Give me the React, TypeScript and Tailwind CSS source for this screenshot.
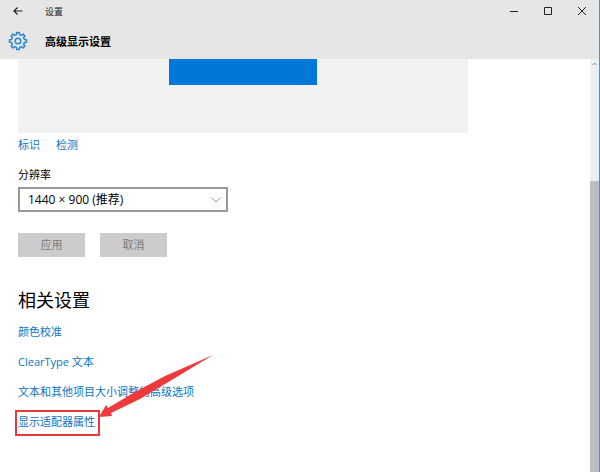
import { useState } from "react";

const relatedLinks = ["颜色校准", "ClearType 文本", "文本和其他项目大小调整的高级选项"];

// outline of a cog with 8 teeth around 0,0
const gearPath = () => {
  const points: string[] = [];
  for (let i = 0; i < 8; i++) {
    const corners = [
      [-13, 6.6],
      [-9, 8.6],
      [9, 8.6],
      [13, 6.6],
    ];
    corners.forEach(([offset, radius]) => {
      const angle = ((i * 45 + offset) * Math.PI) / 180;
      points.push(`${(Math.cos(angle) * radius).toFixed(2)} ${(Math.sin(angle) * radius).toFixed(2)}`);
    });
  }
  return `M${points.join("L")}Z`;
};

function TitleBar() {
  return (
    <header className="bg-[#e6e6e6] h-[59px] shrink-0">
      <div className="flex items-center justify-between h-[22px]">
        <div className="flex items-center">
          <button aria-label="返回" className="w-9 h-[22px] flex items-center justify-center">
            <svg width="10" height="8" viewBox="0 0 10 8" fill="none" stroke="#222" strokeWidth="1.2">
              <path d="M9.5 4H1M4.5 .5L1 4l3.500 3.500" />
            </svg>
          </button>
          <span className="pl-[9px] text-[9px] leading-none text-[#222]">设置</span>
        </div>
        <div className="flex items-center">
          <button aria-label="最小化" className="w-[34px] h-[22px] flex items-center justify-center">
            <svg width="8" height="8" viewBox="0 0 8 8" stroke="#222">
              <path d="M0 4.500h8" />
            </svg>
          </button>
          <button aria-label="最大化" className="w-[34px] h-[22px] flex items-center justify-center">
            <svg width="8" height="8" viewBox="0 0 8 8" fill="none" stroke="#222">
              <path d="M.5 .5h7v7h-7z" />
            </svg>
          </button>
          <button aria-label="关闭" className="w-[34px] h-[22px] flex items-center justify-center">
            <svg width="8" height="8" viewBox="0 0 8 8" stroke="#222">
              <path d="M0 0l8 8M8 0L0 8" />
            </svg>
          </button>
        </div>
      </div>
      <div className="flex items-center h-[38px]">
        <svg className="ml-2" width="20" height="20" viewBox="-10 -10 20 20" fill="none" stroke="#2a86c8" strokeWidth="1.5" strokeLinejoin="round">
          <path d={gearPath()} />
          <circle r="2.800" />
        </svg>
        <h1 className="pl-[17px] text-[11px] leading-none font-bold text-black">高级显示设置</h1>
      </div>
    </header>
  );
}

function ScrollBar() {
  return (
    <div className="w-[9px] shrink-0 flex flex-col">
      <div className="h-[122px] shrink-0 pt-[3px] flex justify-center bg-linear-to-r from-[#f1efed] from-50% to-[#e3f1fa] to-50%">
        <svg width="5" height="4" viewBox="0 0 5 4" fill="none" stroke="#888">
          <path d="M.5 3l2-2 2 2" />
        </svg>
      </div>
      <div className="grow bg-linear-to-r from-[#c1bfbe] from-50% to-[#b3c0cb] to-50%"></div>
    </div>
  );
}

export default function App() {
  const [resolution, setResolution] = useState("1440");

  return (
    <div className="flex flex-col h-screen overflow-hidden bg-white border-r border-[#4d93bd] text-[11px] leading-4 text-black font-['Open_Sans','Noto_Sans_CJK_SC',sans-serif]">
      <TitleBar />
      <div className="flex grow min-h-0">
        <main className="grow min-w-0 pl-[18px]">
          <div className="max-w-[450px] h-[74px] bg-[#f2f2f2] flex justify-center">
            <div className="w-[148px] h-[26px] bg-[#0078d7]"></div>
          </div>
          <div className="flex gap-4 pt-1 text-[#0a74c4]">
            <a href="#identify">标识</a>
            <a href="#detect">检测</a>
          </div>
          <label htmlFor="resolution" className="block pt-[14px]">分辨率</label>
          <div className="relative w-[210px] mt-1">
            <select
              id="resolution"
              value={resolution}
              onChange={(e) => setResolution(e.target.value)}
              className="block appearance-none w-full h-[25px] pl-2 pr-6 border-2 border-[#999] bg-white text-xs"
            >
              <option value="1440">1440 × 900 (推荐)</option>
              <option value="1280">1280 × 800</option>
            </select>
            <svg className="absolute right-[7px] top-[10px] pointer-events-none" width="10" height="6" viewBox="0 0 10 6" fill="none" stroke="#999">
              <path d="M.5 .5L5 5 9.500 .5" />
            </svg>
          </div>
          <div className="flex gap-[15px] pt-[21px] text-[#7a7a7a]">
            <button disabled className="w-[67px] h-6 bg-[#ccc]">应用</button>
            <button disabled className="w-[67px] h-6 bg-[#ccc]">取消</button>
          </div>
          <h2 className="pt-[31px] text-[18px] leading-6">相关设置</h2>
          <ul className="flex flex-col gap-[14px] pt-3 text-[#0a74c4]">
            {relatedLinks.map((link) => (
              <li key={link}>
                <a href="#related">{link}</a>
              </li>
            ))}
            <li className="relative w-fit">
              <a href="#adapter">显示适配器属性</a>
              <div className="absolute -left-[3px] -top-[4px] w-[85px] h-[26px] border-2 border-[#e8383d] pointer-events-none"></div>
              <svg className="absolute left-[80px] -top-[60px] pointer-events-none" width="116" height="64" viewBox="98 354 116 64" fill="#ee3a3c">
                <path d="M99 417L106 405 108 408 135 392 165 376 213 355 180 375 140 399 111 413 112 416Z" />
              </svg>
            </li>
          </ul>
        </main>
        <ScrollBar />
      </div>
    </div>
  );
}
